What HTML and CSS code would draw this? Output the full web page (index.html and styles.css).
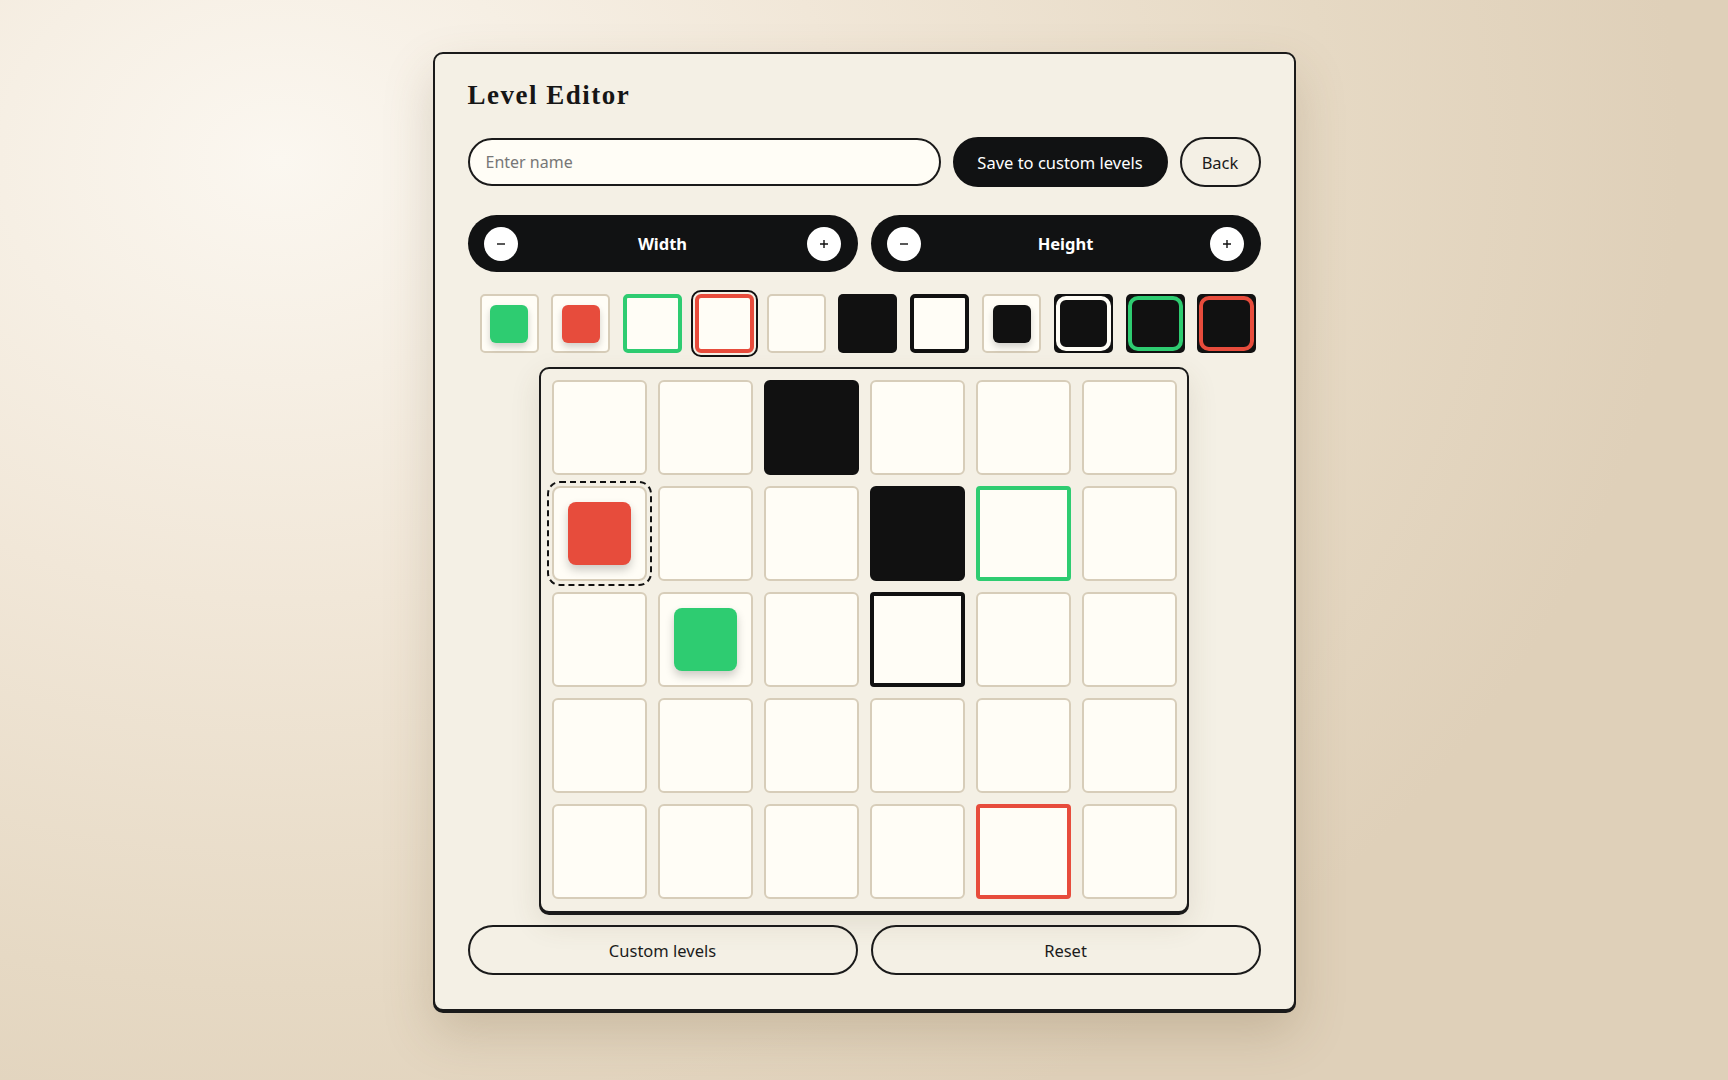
FILE: index.html
```html
<!DOCTYPE html>
<html lang="en">
<head>
<meta charset="utf-8">
<title>Level Editor</title>
<link rel="stylesheet" href="styles.css">
</head>
<body>
<main class="panel">
  <h1 class="title">Level Editor</h1>

  <div class="name-row">
    <input class="name-input" type="text" placeholder="Enter name">
    <button class="btn btn-dark">Save to custom levels</button>
    <button class="btn btn-outline">Back</button>
  </div>

  <div class="size-row">
    <div class="stepper">
      <button class="step"><svg viewBox="0 0 12 12" width="12" height="12"><path d="M2 6h8" stroke="#111" stroke-width="1.4"/></svg></button>
      <span class="step-label">Width</span>
      <button class="step"><svg viewBox="0 0 12 12" width="12" height="12"><path d="M2 6h8M6 2v8" stroke="#111" stroke-width="1.4"/></svg></button>
    </div>
    <div class="stepper">
      <button class="step"><svg viewBox="0 0 12 12" width="12" height="12"><path d="M2 6h8" stroke="#111" stroke-width="1.4"/></svg></button>
      <span class="step-label">Height</span>
      <button class="step"><svg viewBox="0 0 12 12" width="12" height="12"><path d="M2 6h8M6 2v8" stroke="#111" stroke-width="1.4"/></svg></button>
    </div>
  </div>

  <div class="palette">
    <div class="tile light"><span class="piece green"></span></div>
    <div class="tile light"><span class="piece red"></span></div>
    <div class="tile goal-green"></div>
    <div class="tile goal-red selected"></div>
    <div class="tile light"></div>
    <div class="tile wall"></div>
    <div class="tile goal-black"></div>
    <div class="tile light"><span class="piece black"></span></div>
    <div class="tile wall"><span class="ring white"></span></div>
    <div class="tile wall"><span class="ring green"></span></div>
    <div class="tile wall"><span class="ring red"></span></div>
  </div>

  <div class="board">
    <div class="cell"></div>
    <div class="cell"></div>
    <div class="cell wall"></div>
    <div class="cell"></div>
    <div class="cell"></div>
    <div class="cell"></div>

    <div class="cell hover"><span class="piece red"></span></div>
    <div class="cell"></div>
    <div class="cell"></div>
    <div class="cell wall"></div>
    <div class="cell goal-green"></div>
    <div class="cell"></div>

    <div class="cell"></div>
    <div class="cell"><span class="piece green"></span></div>
    <div class="cell"></div>
    <div class="cell goal-black"></div>
    <div class="cell"></div>
    <div class="cell"></div>

    <div class="cell"></div>
    <div class="cell"></div>
    <div class="cell"></div>
    <div class="cell"></div>
    <div class="cell"></div>
    <div class="cell"></div>

    <div class="cell"></div>
    <div class="cell"></div>
    <div class="cell"></div>
    <div class="cell"></div>
    <div class="cell goal-red"></div>
    <div class="cell"></div>
  </div>

  <div class="bottom-row">
    <button class="btn btn-outline wide">Custom levels</button>
    <button class="btn btn-outline wide">Reset</button>
  </div>
</main>
</body>
</html>
```

FILE: styles.css
```css
* { box-sizing: border-box; }

html, body {
  margin: 0;
  height: 100%;
}

body {
  min-height: 1080px;
  background: radial-gradient(ellipse 1400px 1100px at 280px 160px, #fbf7f0 0%, #f1e7d8 40%, #e6d9c4 75%, #dfd0b9 100%);
  font-family: "Noto Sans", "Open Sans", sans-serif;
  color: #1b1b1b;
  display: flex;
  justify-content: center;
  align-items: flex-start;
  padding-top: 52px;
}

.panel {
  width: 863px;
  background: #f4f0e5;
  border: 2px solid #1a1a1a;
  border-radius: 10px;
  box-shadow: 0 2px 0 #1a1a1a, 0 22px 50px rgba(110, 85, 50, 0.22);
  padding: 26px 33px 34px;
  display: flex;
  flex-direction: column;
}

.title {
  margin: 0;
  font-family: "Liberation Serif", "DejaVu Serif", serif;
  font-weight: bold;
  font-size: 27px;
  line-height: 31px;
  letter-spacing: 1.5px;
  color: #161616;
}

.name-row {
  margin-top: 26px;
  display: flex;
  align-items: center;
  gap: 12px;
  height: 50px;
}

.name-input {
  flex: 1;
  height: 48px;
  border: 2px solid #1a1a1a;
  border-radius: 24px;
  background: #fffdf6;
  padding: 0 16px;
  font-family: inherit;
  font-size: 16px;
  color: #1b1b1b;
  outline: none;
}

.name-input::placeholder { color: #777; }

.btn {
  height: 50px;
  border-radius: 25px;
  font-family: inherit;
  font-size: 16.5px;
  padding: 0 16px;
  cursor: pointer;
}

.btn-dark {
  background: #111213;
  color: #fff;
  border: 2px solid #111213;
  width: 215px;
}

.btn-outline {
  background: transparent;
  color: #1b1b1b;
  border: 2px solid #1a1a1a;
  width: 81px;
}

.size-row {
  margin-top: 28px;
  display: grid;
  grid-template-columns: 1fr 1fr;
  gap: 13px;
}

.stepper {
  height: 57px;
  background: #111213;
  border-radius: 29px;
  display: flex;
  align-items: center;
  justify-content: space-between;
  padding: 0 16px;
}

.step {
  width: 34px;
  height: 34px;
  border-radius: 50%;
  border: none;
  background: #fff;
  display: flex;
  align-items: center;
  justify-content: center;
  padding: 0;
}

.step-label {
  color: #fff;
  font-weight: bold;
  font-size: 16.5px;
}

.palette {
  margin-top: 22px;
  display: flex;
  gap: 12.8px;
  padding-left: 12px;
}

.tile {
  width: 59px;
  height: 59px;
  flex: none;
  border-radius: 5px;
  display: flex;
  align-items: center;
  justify-content: center;
}

.tile.light {
  background: #fffdf6;
  border: 2px solid #d7cdb9;
}

.tile.wall { background: #111111; }

.tile.goal-green { background: #fffdf6; border: 4px solid #2ecc71; }
.tile.goal-red { background: #fffdf6; border: 4px solid #e74c3c; }
.tile.goal-black { background: #fffdf6; border: 4px solid #111111; }

.tile.selected {
  outline: 2px solid #111;
  outline-offset: 2px;
  border-radius: 6px;
}

.tile .piece {
  width: 38px;
  height: 38px;
  border-radius: 6px;
  box-shadow: 0 4px 7px rgba(0, 0, 0, 0.18);
}

.piece.green { background: #2ecc71; }
.piece.red { background: #e74c3c; }
.piece.black { background: #111111; }

.ring {
  width: 55px;
  height: 55px;
  border-radius: 10px;
  border: 4px solid;
  background: #111111;
}

.ring.white { border-color: #fffdf6; }
.ring.green { border-color: #2ecc71; }
.ring.red { border-color: #e74c3c; }

.board {
  margin-top: 14px;
  align-self: center;
  display: grid;
  grid-template-columns: repeat(6, 95px);
  grid-auto-rows: 95px;
  gap: 11px;
  padding: 11px 10px 12px 11px;
  border: 2px solid #1a1a1a;
  border-radius: 10px;
  background: #f4f0e5;
  box-shadow: 0 2px 0 #1a1a1a, 0 10px 30px rgba(90, 70, 40, 0.12);
}

.cell {
  background: #fffdf6;
  border: 2px solid #d7cdb9;
  border-radius: 6px;
  display: flex;
  align-items: center;
  justify-content: center;
}

.cell.wall { background: #111111; border-color: #111111; }
.cell.goal-green { border: 4px solid #2ecc71; border-radius: 4px; }
.cell.goal-red { border: 4px solid #e74c3c; border-radius: 4px; }
.cell.goal-black { border: 4px solid #111111; border-radius: 4px; }

.cell.hover {
  outline: 2px dashed #111;
  outline-offset: 3px;
  border-radius: 8px;
}

.cell .piece {
  width: 63px;
  height: 63px;
  border-radius: 8px;
  box-shadow: 0 5px 10px rgba(0, 0, 0, 0.2);
}

.bottom-row {
  margin-top: 12px;
  display: grid;
  grid-template-columns: 1fr 1fr;
  gap: 13px;
}

.btn.wide {
  width: auto;
  height: 50px;
}
```
